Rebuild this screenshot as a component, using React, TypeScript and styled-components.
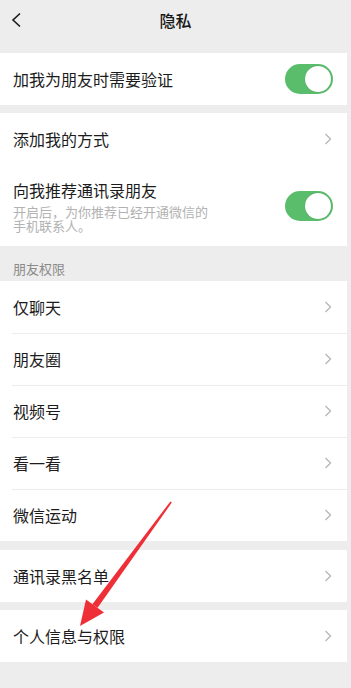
import styled, { createGlobalStyle } from "styled-components"

const GlobalStyle = createGlobalStyle`
    html, body {
        margin: 0;
        padding: 0;
        background-color: #ededed;
        font-family: "Noto Sans CJK SC", "Noto Sans", sans-serif;
    }
`;

const Page = styled.div`
    position: relative;
    width: 351px;
    height: 688px;
    overflow: hidden;
    background-color: #ededed;
`;

const TopBar = styled.header`
    height: 40px;
    display: flex;
    align-items: center;
    justify-content: center;
    position: relative;
`;

const BackButton = styled.div`
    position: absolute;
    left: 10px;
    top: 10px;
    width: 16px;
    height: 20px;
    display: flex;
    align-items: center;
`;

const Title = styled.h1`
    margin: 0;
    font-size: 16px;
    font-weight: 500;
    color: #181818;
`;

const Content = styled.div`
    padding-right: 4px;
    padding-top: 13px;
    display: flex;
    flex-direction: column;
`;

const Group = styled.section<{ $gap: number }>`
    background-color: #ffffff;
    margin-top: ${(p) => p.$gap}px;
`;

const Row = styled.div<{ $tall?: boolean }>`
    display: flex;
    align-items: center;
    justify-content: space-between;
    min-height: 52px;
    box-sizing: border-box;
    padding: ${(p) => (p.$tall ? "14px 15px 13px 13px" : "0 15px 0 13px")};
    position: relative;

    & + &::before {
        content: "";
        position: absolute;
        left: 12px;
        right: 0;
        top: 0;
        border-top: 1px solid #ececec;
    }
`;

const TextBlock = styled.div`
    display: flex;
    flex-direction: column;
`;

const Label = styled.span`
    font-size: 16px;
    line-height: 22px;
    color: #1c1c1c;
`;

const Hint = styled.span`
    font-size: 13px;
    line-height: 14px;
    margin-top: 4px;
    max-width: 200px;
    color: #b2b2b2;
`;

const SectionTitle = styled.div`
    height: 35px;
    box-sizing: border-box;
    padding: 0 13px 3px;
    display: flex;
    align-items: flex-end;
    font-size: 13px;
    color: #8a8a8a;
`;

const Track = styled.div<{ $on: boolean }>`
    width: 48px;
    height: 30px;
    border-radius: 15px;
    background-color: ${(p) => (p.$on ? "#59bd6b" : "#e5e5e5")};
    display: flex;
    align-items: center;
    justify-content: ${(p) => (p.$on ? "flex-end" : "flex-start")};
    padding: 0 2px;
    box-sizing: border-box;
    margin-right: -1px;
`;

const Knob = styled.div`
    width: 26px;
    height: 26px;
    border-radius: 50%;
    background-color: #ffffff;
    box-shadow: 0 0 1px rgba(0, 0, 0, 0.25);
`;

const Arrow = styled.svg`
    position: absolute;
    left: 0;
    top: 0;
    pointer-events: none;
`;

function Chevron() {
    return (
        <svg width="8" height="12" viewBox="0 0 8 12">
            <path d="M1.5 1 L6.5 6 L1.5 11" fill="none" stroke="#b8b8b8" strokeWidth="1.4" />
        </svg>
    )
}

function Switch({ on }: { on: boolean }) {
    return (
        <Track $on={on}>
            <Knob />
        </Track>
    )
}

const friendRows = ["仅聊天", "朋友圈", "视频号", "看一看", "微信运动"];

export default function App() {
    return (
        <Page>
            <GlobalStyle />
            <TopBar>
                <BackButton>
                    <svg width="12" height="16" viewBox="0 0 12 16">
                        <path d="M10 1.5 L3 8 L10 14.5" fill="none" stroke="#1a1a1a" strokeWidth="1.6" />
                    </svg>
                </BackButton>
                <Title>隐私</Title>
            </TopBar>
            <Content>
                <Group $gap={0}>
                    <Row>
                        <Label>加我为朋友时需要验证</Label>
                        <Switch on />
                    </Row>
                </Group>

                <Group $gap={8}>
                    <Row>
                        <Label>添加我的方式</Label>
                        <Chevron />
                    </Row>
                    <Row $tall>
                        <TextBlock>
                            <Label>向我推荐通讯录朋友</Label>
                            <Hint>开启后，为你推荐已经开通微信的手机联系人。</Hint>
                        </TextBlock>
                        <Switch on />
                    </Row>
                </Group>

                <SectionTitle>朋友权限</SectionTitle>
                <Group $gap={0}>
                    {friendRows.map((r) => (
                        <Row key={r}>
                            <Label>{r}</Label>
                            <Chevron />
                        </Row>
                    ))}
                </Group>

                <Group $gap={9}>
                    <Row>
                        <Label>通讯录黑名单</Label>
                        <Chevron />
                    </Row>
                </Group>

                <Group $gap={8}>
                    <Row>
                        <Label>个人信息与权限</Label>
                        <Chevron />
                    </Row>
                </Group>
            </Content>

            <Arrow width="351" height="688" viewBox="0 0 351 688">
                <polygon
                    points="170.4,501.4 171.8,502.6 97.6,607.8 92.4,604.2"
                    fill="#ee2f37"
                />
                <polygon points="80,626 86,599.5 104,612.5" fill="#ee2f37" />
            </Arrow>
        </Page>
    )
}
